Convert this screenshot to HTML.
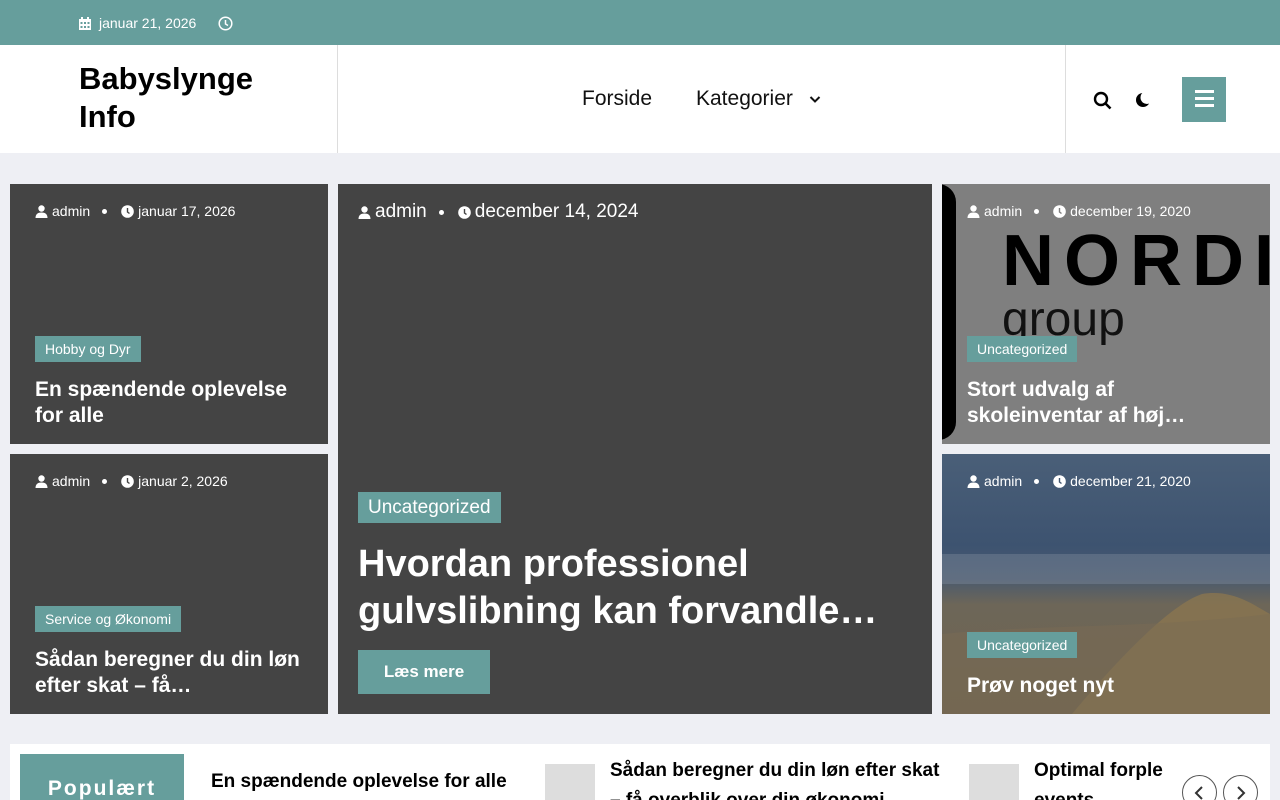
<!DOCTYPE html>
<html><head><meta charset="utf-8"><style>
*{box-sizing:border-box;margin:0;padding:0}
html,body{width:1280px;height:800px;overflow:hidden}
body{background:#eeeff4;font-family:"Liberation Sans",sans-serif;position:relative}
.top{position:absolute;left:0;top:0;width:1280px;height:45px;background:#669e9c;color:#fff;font-size:14px}
.hdr{position:absolute;left:0;top:45px;width:1280px;height:108px;background:#fff}
.abs{position:absolute}
.card{position:absolute;background:#444;color:#fff;overflow:hidden}
.meta{position:absolute;left:25px;top:19px;font-size:14px;white-space:nowrap;display:flex;align-items:center}
.meta svg{fill:#fff;margin-right:4px}
.dot{display:inline-block;width:5px;height:5px;border-radius:50%;background:#fff;margin:0 14px 0 12px}
.cat{position:absolute;left:25px;background:#669e9c;color:#fff;font-size:14px;padding:0 10px;height:26px;line-height:26px}
.ttl{position:absolute;left:25px;right:20px;font-weight:bold;font-size:21px;line-height:26px}
</style></head><body>
<div class="top">
 <svg class="abs" style="left:79px;top:17px" width="12" height="13" viewBox="0 0 12 13"><rect x="0" y="2" width="12" height="11" fill="#fff"/><rect x="2" y="0" width="2" height="3" fill="#fff"/><rect x="8" y="0" width="2" height="3" fill="#fff"/><g fill="#669e9c"><rect x="1.5" y="5" width="2" height="2"/><rect x="5" y="5" width="2" height="2"/><rect x="8.5" y="5" width="2" height="2"/><rect x="1.5" y="9" width="2" height="2"/><rect x="5" y="9" width="2" height="2"/><rect x="8.5" y="9" width="2" height="2"/></g></svg>
 <span class="abs" style="left:99px;top:15px">januar 21, 2026</span>
 <svg class="abs" style="left:218px;top:16px" width="15" height="15" viewBox="0 0 15 15"><circle cx="7.5" cy="7.5" r="6.3" fill="none" stroke="#fff" stroke-width="1.5"/><path d="M7.5 4v4l2.5 1.5" fill="none" stroke="#fff" stroke-width="1.5"/></svg>
</div>
<div class="hdr">
 <div class="abs" style="left:79px;top:15px;font-size:31px;font-weight:bold;line-height:38px;color:#000">Babyslynge<br>Info</div>
 <div class="abs" style="left:337px;top:0;width:1px;height:108px;background:#ddd"></div>
 <div class="abs" style="left:1065px;top:0;width:1px;height:108px;background:#ddd"></div>
 <div class="abs" style="left:582px;top:42px;font-size:21px;color:#111">Forside</div>
 <div class="abs" style="left:696px;top:42px;font-size:21px;color:#111">Kategorier</div>
 <svg class="abs" style="left:809px;top:50px" width="12" height="9" viewBox="0 0 12 9"><path d="M1.5 2l4.5 4.5 4.5-4.5" fill="none" stroke="#111" stroke-width="2"/></svg>
 <svg class="abs" style="left:1093px;top:46px" width="20" height="20" viewBox="0 0 20 20"><circle cx="8" cy="8" r="6" fill="none" stroke="#000" stroke-width="2.4"/><path d="M12.5 12.5l5 5" stroke="#000" stroke-width="2.6"/></svg>
 <svg class="abs" style="left:1135px;top:46px" width="16" height="18" viewBox="0 0 16 18"><circle cx="8" cy="9" r="7" fill="#000"/><circle cx="12" cy="6.5" r="6.5" fill="#fff"/></svg>
 <div class="abs" style="left:1182px;top:32px;width:44px;height:45px;background:#669e9c"></div>
 <div class="abs" style="left:1195px;top:52px;width:19px;height:3px;background:#fff;box-shadow:0 -7px 0 #fff,0 7px 0 #fff"></div>
</div>

<div class="card" style="left:10px;top:184px;width:318px;height:260px">
 <div class="meta"><svg width="13" height="13" viewBox="0 0 13 13"><circle cx="6.5" cy="3.5" r="3.2"/><path d="M0.5 13c0-4 2.5-5.5 6-5.5s6 1.5 6 5.5z"/></svg>admin<span class="dot"></span><svg width="13" height="13" viewBox="0 0 13 13"><circle cx="6.5" cy="6.5" r="6.3"/><path d="M6.5 3v4l2 1.5" stroke="#444" stroke-width="1.4" fill="none"/></svg>januar 17, 2026</div>
 <div class="cat" style="top:152px">Hobby og Dyr</div>
 <div class="ttl" style="top:193px">En spændende oplevelse for alle</div>
</div>
<div class="card" style="left:10px;top:454px;width:318px;height:260px">
 <div class="meta"><svg width="13" height="13" viewBox="0 0 13 13"><circle cx="6.5" cy="3.5" r="3.2"/><path d="M0.5 13c0-4 2.5-5.5 6-5.5s6 1.5 6 5.5z"/></svg>admin<span class="dot"></span><svg width="13" height="13" viewBox="0 0 13 13"><circle cx="6.5" cy="6.5" r="6.3"/><path d="M6.5 3v4l2 1.5" stroke="#444" stroke-width="1.4" fill="none"/></svg>januar 2, 2026</div>
 <div class="cat" style="top:152px">Service og Økonomi</div>
 <div class="ttl" style="top:193px">Sådan beregner du din løn efter skat – få…</div>
</div>
<div class="card" style="left:338px;top:184px;width:594px;height:530px">
 <div class="meta" style="left:20px;top:17px;font-size:19px"><svg width="13" height="13" viewBox="0 0 13 13"><circle cx="6.5" cy="3.5" r="3.2"/><path d="M0.5 13c0-4 2.5-5.5 6-5.5s6 1.5 6 5.5z"/></svg>admin<span class="dot"></span><svg width="13" height="13" viewBox="0 0 13 13"><circle cx="6.5" cy="6.5" r="6.3"/><path d="M6.5 3v4l2 1.5" stroke="#444" stroke-width="1.4" fill="none"/></svg>december 14, 2024</div>
 <div class="cat" style="left:20px;top:308px;height:31px;line-height:31px;font-size:19px">Uncategorized</div>
 <div class="ttl" style="left:20px;top:357px;font-size:38px;line-height:47px">Hvordan professionel gulvslibning kan forvandle…</div>
 <div class="abs" style="left:20px;top:466px;width:132px;height:44px;background:#669e9c;color:#fff;font-weight:bold;font-size:17px;text-align:center;line-height:44px">Læs mere</div>
</div>
<div class="card" style="left:942px;top:184px;width:328px;height:260px;background:#7f7f7f">
 <div class="abs" style="left:-30px;top:0;width:44px;height:256px;border:14px solid #000;border-radius:18px;border-left:none"></div>
 <div class="abs" style="left:60px;top:36px;font-size:72px;font-weight:bold;letter-spacing:10px;color:#000">NORDIS</div>
 <div class="abs" style="left:60px;top:108px;font-size:48px;color:#111">group</div>
 <div class="meta"><svg width="13" height="13" viewBox="0 0 13 13"><circle cx="6.5" cy="3.5" r="3.2"/><path d="M0.5 13c0-4 2.5-5.5 6-5.5s6 1.5 6 5.5z"/></svg>admin<span class="dot"></span><svg width="13" height="13" viewBox="0 0 13 13"><circle cx="6.5" cy="6.5" r="6.3"/><path d="M6.5 3v4l2 1.5" stroke="#7f7f7f" stroke-width="1.4" fill="none"/></svg>december 19, 2020</div>
 <div class="cat" style="top:152px">Uncategorized</div>
 <div class="ttl" style="top:193px">Stort udvalg af skoleinventar af høj…</div>
</div>
<div class="card" style="left:942px;top:454px;width:328px;height:260px;background:linear-gradient(180deg,#4a5f78 0%,#3d5370 35%,#4a5a6e 48%,#6d6658 58%,#6f6350 100%)">
 <div class="abs" style="left:0;top:100px;width:328px;height:30px;background:rgba(150,160,175,.3)"></div>
 <svg class="abs" style="left:0;top:0" width="328" height="260" viewBox="0 0 328 260"><path d="M130 260 C180 200 230 150 260 140 C290 135 310 150 328 160 L328 260Z" fill="#8a7650" opacity=".8"/><path d="M0 180 C100 170 200 175 328 160 L328 260 L0 260Z" fill="#7a6c54" opacity=".5"/></svg>
 <div class="meta"><svg width="13" height="13" viewBox="0 0 13 13"><circle cx="6.5" cy="3.5" r="3.2"/><path d="M0.5 13c0-4 2.5-5.5 6-5.5s6 1.5 6 5.5z"/></svg>admin<span class="dot"></span><svg width="13" height="13" viewBox="0 0 13 13"><circle cx="6.5" cy="6.5" r="6.3"/><path d="M6.5 3v4l2 1.5" stroke="#42566e" stroke-width="1.4" fill="none"/></svg>december 21, 2020</div>
 <div class="cat" style="top:178px">Uncategorized</div>
 <div class="ttl" style="top:219px">Prøv noget nyt</div>
</div>

<div class="abs" style="left:10px;top:744px;width:1260px;height:70px;background:#fff">
 <div class="abs" style="left:10px;top:10px;width:164px;height:60px;background:#669e9c;color:#fff;font-weight:bold;font-size:21px;letter-spacing:2px;text-align:center;line-height:70px">Populært</div>
 <div class="abs" style="left:201px;top:27px;font-size:19px;font-weight:bold;color:#000;white-space:nowrap">En spændende oplevelse for alle</div>
 <div class="abs" style="left:535px;top:20px;width:50px;height:50px;background:#ddd"></div>
 <div class="abs" style="left:600px;top:12px;font-size:19px;font-weight:bold;color:#000;line-height:30px;width:340px">Sådan beregner du din løn efter skat – få overblik over din økonomi</div>
 <div class="abs" style="left:959px;top:20px;width:50px;height:50px;background:#ddd"></div>
 <div class="abs" style="left:1024px;top:12px;font-size:19px;font-weight:bold;color:#000;line-height:30px;width:140px;overflow:hidden;height:60px;white-space:nowrap">Optimal forple<br>events</div>
 <div class="abs" style="left:1172px;top:31px;width:35px;height:35px;border:1px solid #555;border-radius:50%;background:#fff"></div>
 <div class="abs" style="left:1213px;top:31px;width:35px;height:35px;border:1px solid #555;border-radius:50%;background:#fff"></div>
 <svg class="abs" style="left:1183px;top:41px" width="12" height="16" viewBox="0 0 12 16"><path d="M9 2L3 8l6 6" fill="none" stroke="#333" stroke-width="2"/></svg>
 <svg class="abs" style="left:1225px;top:41px" width="12" height="16" viewBox="0 0 12 16"><path d="M3 2l6 6-6 6" fill="none" stroke="#333" stroke-width="2"/></svg>
</div>
</body></html>
